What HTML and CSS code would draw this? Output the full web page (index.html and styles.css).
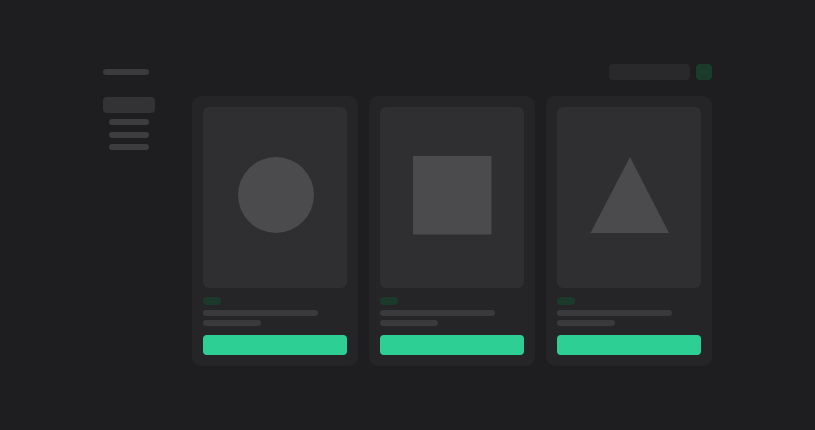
FILE: index.html
```html
<!DOCTYPE html>
<html lang="en">
<head>
<meta charset="utf-8">
<title>Gallery</title>
<link rel="stylesheet" href="styles.css">
</head>
<body>
<div class="layout">
  <div class="brand"><span class="brand-bar"></span></div>
  <header class="topbar">
    <div class="search"></div>
    <div class="action"></div>
  </header>
  <nav class="sidebar">
    <div class="nav-active"></div>
    <div class="nav-line"></div>
    <div class="nav-line"></div>
    <div class="nav-line"></div>
  </nav>
  <main class="cards">
    <article class="card">
      <div class="media">
        <svg class="shape" width="80" height="80" viewBox="0 0 80 80"><circle cx="41" cy="40" r="38" fill="#4b4b4d"/></svg>
      </div>
      <span class="tag"></span>
      <div class="line line-long"></div>
      <div class="line line-short"></div>
      <div class="button"></div>
    </article>
    <article class="card">
      <div class="media">
        <svg class="shape" width="80" height="80" viewBox="0 0 80 80"><rect x="1" y="1" width="78.5" height="78.5" fill="#4b4b4d"/></svg>
      </div>
      <span class="tag"></span>
      <div class="line line-long"></div>
      <div class="line line-short"></div>
      <div class="button"></div>
    </article>
    <article class="card">
      <div class="media">
        <svg class="shape" width="80" height="80" viewBox="0 0 80 80"><polygon points="41,2 80,78 1.5,78" fill="#4b4b4d"/></svg>
      </div>
      <span class="tag"></span>
      <div class="line line-long"></div>
      <div class="line line-short"></div>
      <div class="button"></div>
    </article>
  </main>
</div>
</body>
</html>
```
FILE: styles.css
```css
html, body {
  margin: 0;
  padding: 0;
  background: #1e1e20;
  font-family: "Inter", "Liberation Sans", sans-serif;
}

.layout {
  display: grid;
  grid-template-columns: 52px 520px;
  grid-template-rows: 16px auto;
  column-gap: 37px;
  row-gap: 16px;
  padding: 64px 0 0 103px;
}

.brand {
  display: flex;
  align-items: center;
}

.brand-bar {
  display: block;
  width: 46px;
  height: 6px;
  border-radius: 3px;
  background: #3b3b3d;
}

.topbar {
  display: flex;
  justify-content: flex-end;
  gap: 6px;
}

.search {
  width: 81px;
  height: 16px;
  border-radius: 4px;
  background: #29292b;
}

.action {
  width: 16px;
  height: 16px;
  border-radius: 4px;
  background: #1b3b2d;
}

.sidebar {
  display: flex;
  flex-direction: column;
  padding-top: 1px;
}

.nav-active {
  height: 16px;
  border-radius: 4px;
  background: #333335;
  margin-bottom: 6px;
}

.nav-line {
  width: 40px;
  height: 6px;
  margin: 0 0 6.5px 6px;
  border-radius: 3px;
  background: #3d3d3f;
}

.cards {
  display: grid;
  grid-template-columns: repeat(3, 166px);
  gap: 11px;
  align-items: start;
}

.card {
  background: #252527;
  border-radius: 9px;
  padding: 11px;
  display: flex;
  flex-direction: column;
}

.media {
  height: 181px;
  border-radius: 6px;
  background: #2f2f31;
  display: flex;
  align-items: center;
  justify-content: center;
  padding-bottom: 5px;
  box-sizing: border-box;
}

.shape {
  display: block;
}

.tag {
  display: block;
  width: 18px;
  height: 8px;
  margin-top: 9px;
  border-radius: 4px;
  background: #1c3a2c;
}

.line {
  height: 6px;
  border-radius: 3px;
  background: #3a3a3c;
}

.line-long {
  width: 115px;
  margin-top: 5px;
}

.line-short {
  width: 58px;
  margin-top: 4px;
}

.button {
  height: 20px;
  margin-top: 9px;
  border-radius: 4px;
  background: #2ecf95;
}
```
